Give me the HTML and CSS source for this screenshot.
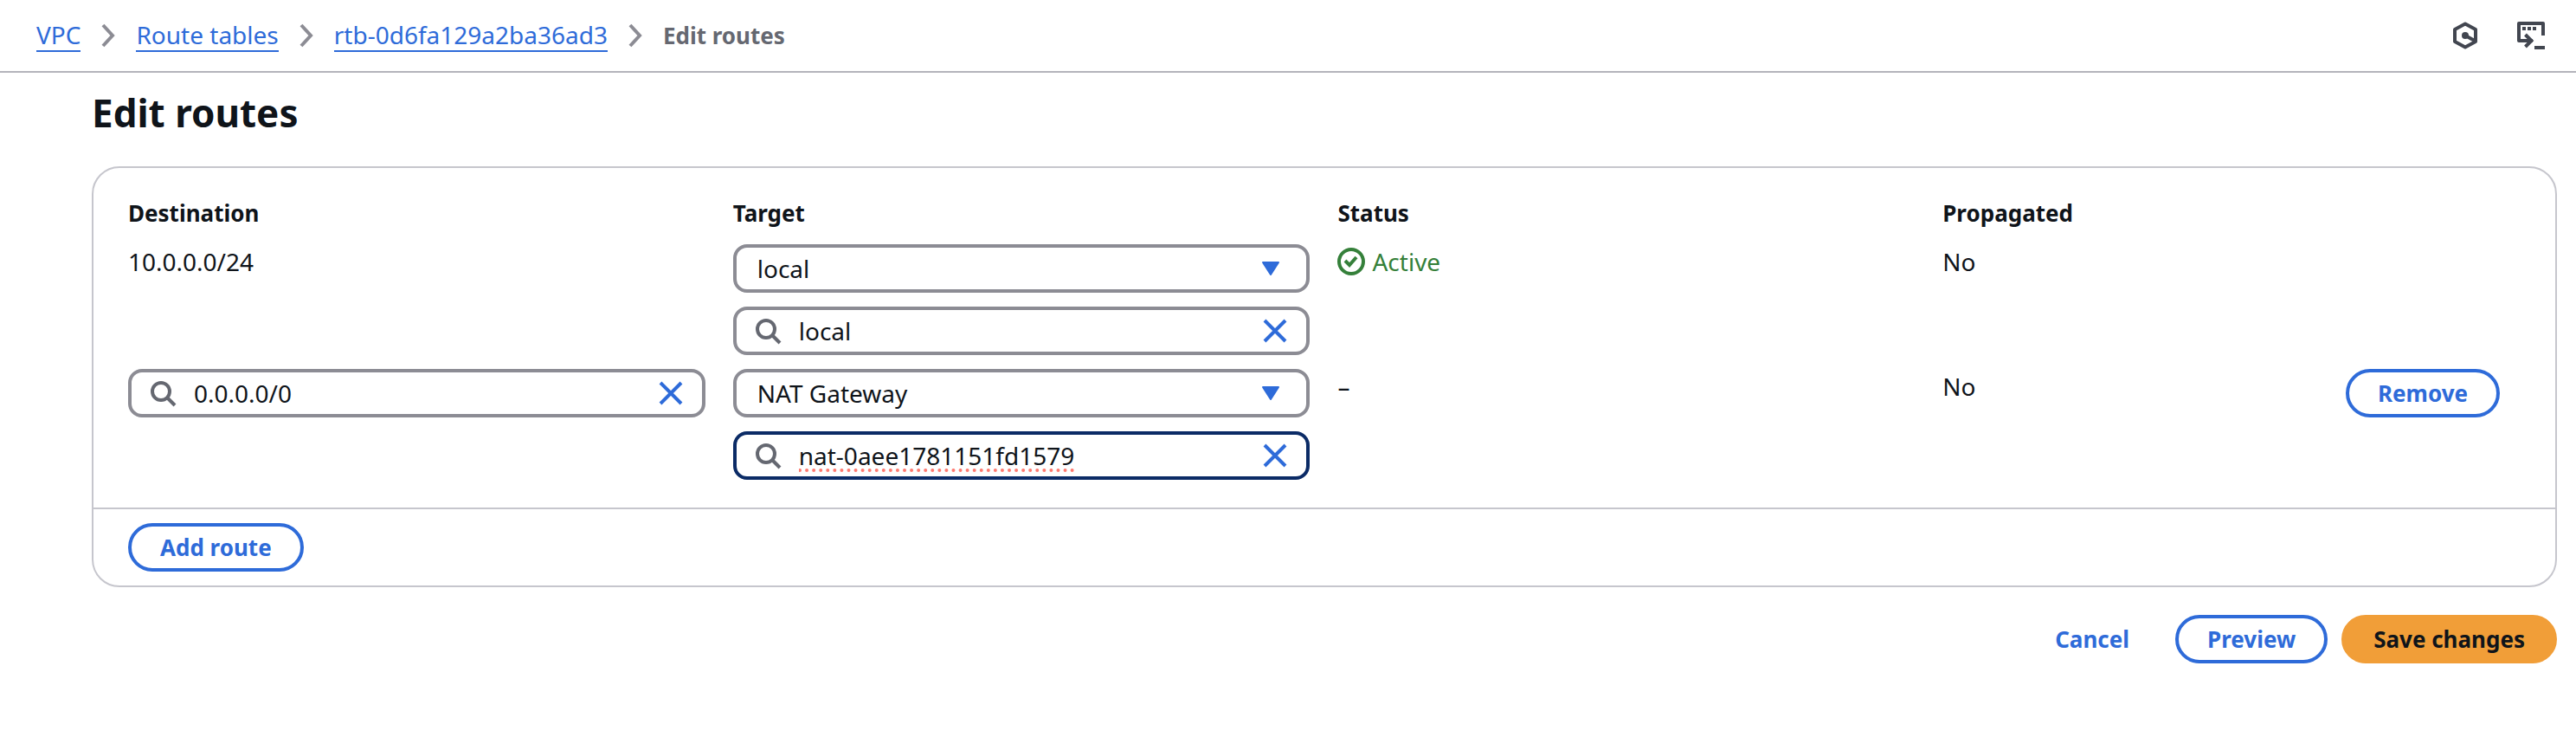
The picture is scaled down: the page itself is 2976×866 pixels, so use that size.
FILE: index.html
```html
<!DOCTYPE html>
<html lang="en">
<head>
<meta charset="utf-8">
<title>Edit routes</title>
<link rel="stylesheet" href="styles.css">
</head>
<body>
<header class="topbar">
  <nav aria-label="Breadcrumbs">
    <ol class="crumbs">
      <li class="crumb"><a class="link" href="#">VPC</a><svg class="chevron" viewBox="0 0 16 28" aria-hidden="true"><path d="M2 2l11 12L2 26"/></svg></li>
      <li class="crumb"><a class="link" href="#">Route tables</a><svg class="chevron" viewBox="0 0 16 28" aria-hidden="true"><path d="M2 2l11 12L2 26"/></svg></li>
      <li class="crumb"><a class="link" href="#">rtb-0d6fa129a2ba36ad3</a><svg class="chevron" viewBox="0 0 16 28" aria-hidden="true"><path d="M2 2l11 12L2 26"/></svg></li>
      <li class="crumb current" aria-current="page">Edit routes</li>
    </ol>
  </nav>
  <div class="tools">
    <button class="tool" type="button" aria-label="Amazon Q"><svg class="tool-icon" viewBox="0 0 32 32"><path d="M16 2.500L28 9v14l-12 6.500L4 23V9z"/><path d="M16 16l11 6"/><circle class="solid" cx="16" cy="16" r="4"/></svg></button>
    <button class="tool" type="button" aria-label="CloudShell"><svg class="tool-icon" viewBox="0 0 32 32"><path d="M18 22H2V2h28v14"/><path class="miter" d="M9.500 15l7 7-7 7"/><path d="M20 30h12M6 8h4M12 8h4M18 8h4"/></svg></button>
  </div>
</header>
<main class="page">
  <h1 class="title">Edit routes</h1>
  <form class="form">
    <section class="card">
      <div class="card-body">
        <table class="routes">
          <colgroup><col class="col-main"><col class="col-main"><col class="col-main"><col><col class="col-action"></colgroup>
          <thead>
            <tr><th scope="col">Destination</th><th scope="col">Target</th><th scope="col">Status</th><th scope="col">Propagated</th><td></td></tr>
          </thead>
          <tbody>
            <tr>
              <td>10.0.0.0/24</td>
              <td>
                <div class="stack">
                  <div class="field"><select class="control" aria-label="Target type"><option>local</option></select><svg class="caret" viewBox="0 0 22 18" aria-hidden="true"><path d="M2 2h18L11 16z"/></svg></div>
                  <div class="field lookup"><svg class="search" viewBox="0 0 32 32" aria-hidden="true"><circle cx="14" cy="14" r="10"/><path d="M21 21l9 9"/></svg><input class="control" type="text" aria-label="Target" value="local"><button class="clear" type="button" aria-label="Clear"><svg class="cross" viewBox="0 0 28 28"><path d="M2 2l24 24M26 2L2 26"/></svg></button></div>
                </div>
              </td>
              <td><span class="status"><svg class="status-icon" viewBox="0 0 32 32" aria-hidden="true"><circle cx="16" cy="16" r="14"/><path d="M9 15l5 5 8-9"/></svg>Active</span></td>
              <td>No</td>
              <td></td>
            </tr>
            <tr>
              <td>
                <div class="field lookup"><svg class="search" viewBox="0 0 32 32" aria-hidden="true"><circle cx="14" cy="14" r="10"/><path d="M21 21l9 9"/></svg><input class="control" type="text" aria-label="Destination" value="0.0.0.0/0"><button class="clear" type="button" aria-label="Clear"><svg class="cross" viewBox="0 0 28 28"><path d="M2 2l24 24M26 2L2 26"/></svg></button></div>
              </td>
              <td>
                <div class="stack">
                  <div class="field"><select class="control" aria-label="Target type"><option>NAT Gateway</option></select><svg class="caret" viewBox="0 0 22 18" aria-hidden="true"><path d="M2 2h18L11 16z"/></svg></div>
                  <div class="field lookup active"><svg class="search" viewBox="0 0 32 32" aria-hidden="true"><circle cx="14" cy="14" r="10"/><path d="M21 21l9 9"/></svg><input class="control misspelled" type="text" aria-label="Target" value="nat-0aee1781151fd1579"><button class="clear" type="button" aria-label="Clear"><svg class="cross" viewBox="0 0 28 28"><path d="M2 2l24 24M26 2L2 26"/></svg></button></div>
                </div>
              </td>
              <td>–</td>
              <td>No</td>
              <td class="action"><button class="button" type="button">Remove</button></td>
            </tr>
          </tbody>
        </table>
      </div>
      <div class="card-footer"><button class="button" type="button">Add route</button></div>
    </section>
    <div class="actions">
      <button class="button plain" type="button">Cancel</button>
      <button class="button" type="button">Preview</button>
      <button class="button primary" type="submit">Save changes</button>
    </div>
  </form>
</main>
</body>
</html>
```

FILE: styles.css
```css
* { box-sizing: border-box; }

body {
  margin: 0;
  background: #fff;
  color: #0f141a;
  font: 28px/40px "Noto Sans", "Open Sans", sans-serif;
}

.topbar {
  display: flex;
  align-items: center;
  justify-content: space-between;
  height: 84px;
  padding: 0 36px 0 42px;
  border-bottom: 2px solid #b4b4bb;
}

.crumbs {
  display: flex;
  align-items: center;
  gap: 24px;
  margin: 0;
  padding: 0;
  list-style: none;
}

.crumb { display: flex; align-items: center; gap: 24px; }
.current { color: #656871; font-size: 26px; font-weight: 700; }

.link {
  color: #2e6bd9;
  line-height: 36px;
  text-decoration: none;
  border-bottom: 2px solid #2e6bd9;
}

.chevron {
  width: 16px;
  height: 28px;
  fill: none;
  stroke: #8c8c94;
  stroke-width: 4;
}

.tools { display: flex; gap: 44px; }
.tool { display: flex; padding: 0; border: 0; background: none; }

.tool-icon {
  width: 32px;
  height: 32px;
  fill: none;
  stroke: #424650;
  stroke-width: 4;
  stroke-linejoin: round;
}

.solid { fill: #424650; stroke: none; }
.miter { stroke-linejoin: miter; }

.page { padding: 18px 22px 0 106px; }

.title { margin: 0 0 34px; font-size: 44px; line-height: 56px; font-weight: 700; }

.card { border: 2px solid #c6c6cd; border-radius: 32px; }
.card-body { padding: 32px 40px; }
.card-footer { padding: 16px 40px; border-top: 2px solid #c6c6cd; }

.routes { width: 100%; table-layout: fixed; border-collapse: collapse; }
.col-main { width: 25.28%; }
.col-action { width: 216px; }
.routes th, .routes td { padding: 16px 32px 0 0; text-align: left; vertical-align: top; }
.routes th, .routes thead td { padding-top: 0; font-size: 26px; }
.routes .action { padding-right: 24px; text-align: right; }

.stack { display: grid; gap: 16px; }

.field {
  display: flex;
  align-items: center;
  height: 56px;
  padding: 0 24px;
  border: 4px solid #8c8c94;
  border-radius: 16px;
}

.lookup { padding: 0 22px 0 20px; }
.active { border-color: #0b2b66; }

.control {
  flex: 1;
  min-width: 0;
  height: 40px;
  padding: 0;
  border: 0;
  outline: 0;
  background: none;
  color: inherit;
  font: inherit;
  appearance: none;
}

.misspelled {
  text-decoration: underline dotted #ff7a70 4px;
  text-underline-offset: 4px;
  text-decoration-skip-ink: none;
}

.search {
  width: 32px;
  height: 32px;
  margin-right: 20px;
  fill: none;
  stroke: #656871;
  stroke-width: 4;
}

.clear { display: flex; padding: 0; border: 0; background: none; }
.cross { width: 28px; height: 28px; fill: none; stroke: #2e6bd9; stroke-width: 4; }
.caret { width: 22px; height: 18px; margin-right: 6px; fill: #2e6bd9; stroke: #2e6bd9; stroke-width: 2; stroke-linejoin: round; }

.status { display: flex; align-items: center; gap: 8px; color: #35803a; }
.status-icon { width: 32px; height: 32px; fill: none; stroke: #35803a; stroke-width: 4; }

.button {
  height: 56px;
  padding: 0 33px;
  border: 4px solid #2e6bd9;
  border-radius: 28px;
  background: #fff;
  color: #2e6bd9;
  font: 700 26px/40px "Noto Sans", "Open Sans", sans-serif;
}

.plain { border-color: transparent; background: none; }
.primary { border-color: #f19e38; background: #f19e38; color: #0f141a; }

.card-footer, .actions, .action { line-height: 0; }
.actions { display: flex; justify-content: flex-end; gap: 16px; padding-top: 32px; }
```
